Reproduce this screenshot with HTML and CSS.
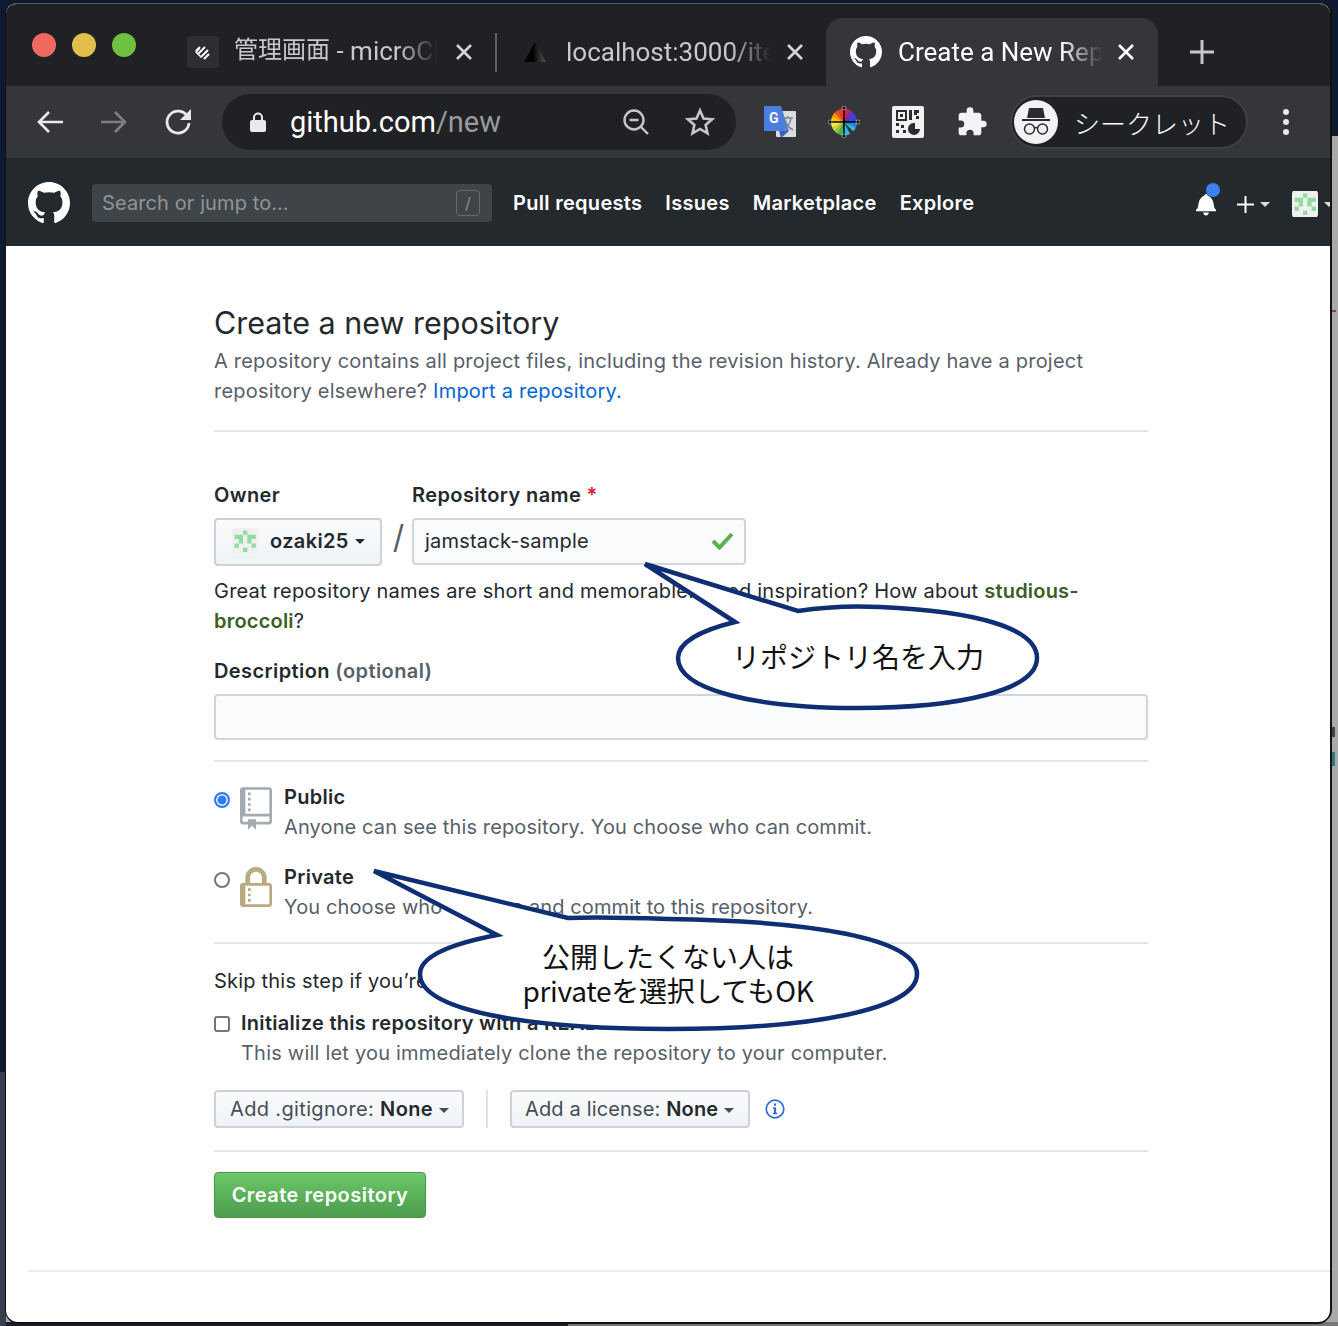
FILE: index.html
```html
<!DOCTYPE html>
<html lang="en">
<head>
<meta charset="UTF-8">
<title>Create a New Repository</title>
<link rel="stylesheet" href="styles.css">
</head>
<body>

<svg class="defs" width="0" height="0">
    <symbol id="mark" viewBox="0 0 16 16"><path fill-rule="evenodd" d="M8 0C3.58 0 0 3.58 0 8c0 3.54 2.29 6.53 5.47 7.59.4.07.55-.17.55-.38 0-.19-.01-.82-.01-1.49-2.01.37-2.53-.49-2.69-.94-.09-.23-.48-.94-.82-1.13-.28-.15-.68-.52-.01-.53.63-.01 1.08.58 1.23.82.72 1.21 1.87.87 2.33.66.07-.52.28-.87.51-1.07-1.78-.2-3.64-.89-3.64-3.95 0-.87.31-1.59.82-2.15-.08-.2-.36-1.02.08-2.12 0 0 .67-.21 2.2.82.64-.18 1.32-.27 2-.27.68 0 1.36.09 2 .27 1.53-1.04 2.2-.82 2.2-.82.44 1.1.16 1.92.08 2.12.51.56.82 1.27.82 2.15 0 3.07-1.87 3.75-3.65 3.95.29.25.54.73.54 1.48 0 1.07-.01 1.93-.01 2.2 0 .21.15.46.55.38A8.013 8.013 0 0016 8c0-4.42-3.58-8-8-8z"/></symbol>
    <symbol id="identicon" viewBox="0 0 26 26">
        <rect width="26" height="26" fill="#f0f0f0"/>
        <path fill="#8cdd9e" d="M11 2.500h4.300v4.300H11zM2.500 6.800h8.500v4.300H2.500zM15.300 6.800h8.500v4.300h-8.500zM6.800 11.100H11v4.300H6.800zM15.300 11.100h4.300v4.300h-4.300zM2.500 15.400h4.300v4.300H2.500zM19.600 15.400h4.300v4.300h-4.300zM11 19.700h4.300V24H11z"/>
    </symbol>
    <symbol id="close" viewBox="0 0 16 16"><path fill="none" stroke="currentColor" stroke-width="2.600" d="M1 1l14 14M15 1L1 15"/></symbol>
</svg>

<div class="window">

    <div class="tabbar">
        <div class="lights">
            <span class="light red"></span>
            <span class="light yellow"></span>
            <span class="light green"></span>
        </div>
        <div class="tab tab-first">
            <span class="favicon-box">
                <svg width="20" height="20" viewBox="0 0 20 20"><path fill="none" stroke="#fff" stroke-width="2" d="M5 12l7-7M8 15l7-7M3 9l4-4M11 17l5-5"/><path fill="#fff" d="M2 10l4-4 1 1-3 3 5 5-1 1z"/></svg>
            </span>
            <span class="tab-title"><span class="cjk-title">管理画面</span> - microCMS</span>
            <svg class="tab-close" width="16" height="16"><use href="#close"/></svg>
        </div>
        <span class="tab-sep"></span>
        <div class="tab tab-second">
            <svg class="triangle" width="24" height="20" viewBox="0 0 24 20"><defs><linearGradient id="tri" x1="0" x2="1"><stop offset="0.4" stop-color="#000"/><stop offset="1" stop-color="#555"/></linearGradient></defs><path fill="url(#tri)" d="M12 0l11 20H1z"/></svg>
            <span class="tab-title">localhost:3000/items</span>
            <svg class="tab-close" width="16" height="16"><use href="#close"/></svg>
        </div>
        <div class="tab tab-active">
            <svg class="tab-mark" width="32" height="32"><use href="#mark"/></svg>
            <span class="tab-title">Create a New Repository</span>
            <svg class="tab-close" width="16" height="16"><use href="#close"/></svg>
        </div>
        <svg class="newtab" width="24" height="24" viewBox="0 0 24 24"><path fill="#c6c7c9" d="M10.500 0h3v10.500h10.500v3H13.500V24h-3V13.500H0v-3h10.500z"/></svg>
    </div>

    <div class="toolbar">
        <svg class="tool" width="28" height="28" viewBox="0 0 28 28"><path fill="none" stroke="#e8eaed" stroke-width="2.600" d="M27 14H3M13 4L3 14l10 10"/></svg>
        <svg class="tool" width="28" height="28" viewBox="0 0 28 28"><path fill="none" stroke="#7d7f82" stroke-width="2.600" d="M1 14h24M15 4l10 10-10 10"/></svg>
        <svg class="tool" width="28" height="28" viewBox="0 0 28 28"><path fill="none" stroke="#e8eaed" stroke-width="2.800" d="M23.500 8.500A11 11 0 1 0 25 15"/><path fill="#e8eaed" d="M27 1v11H16z"/></svg>

        <div class="omnibox">
            <svg class="lock-small" width="16" height="20" viewBox="0 0 16 20"><path fill="none" stroke="#e8eaed" stroke-width="2" d="M4 9V5.500a4 4 0 0 1 8 0V9"/><rect y="8" width="16" height="12" rx="2" fill="#e8eaed"/></svg>
            <span class="url">github.com<span class="url-path">/new</span></span>
            <svg class="omni-zoom" width="28" height="28" viewBox="0 0 28 28"><circle cx="12" cy="12" r="9.500" fill="none" stroke="#c4c6c9" stroke-width="2.400"/><path stroke="#c4c6c9" stroke-width="2.400" d="M7.500 12h9M19 19l7 7"/></svg>
            <svg class="omni-star" width="30" height="30" viewBox="0 0 30 30"><path fill="none" stroke="#c4c6c9" stroke-width="2.600" d="M15 3.500l3.500 8 8.500.8-6.400 5.600 1.900 8.400-7.500-4.400-7.500 4.400 1.900-8.400L3 12.300l8.500-.8z"/></svg>
        </div>

        <div class="extensions">
            <svg width="32" height="32" viewBox="0 0 32 32">
                <rect x="12" y="5" width="20" height="26" rx="1" fill="#dcdde0"/>
                <path fill="#4a7fe0" d="M0 0h17l8 25H1a1 1 0 0 1-1-1z"/>
                <path fill="#3a5fc4" d="M15 25h10l-8 7z"/>
                <text x="5" y="17" class="g-letter">G</text>
                <path fill="none" stroke="#7f8a94" stroke-width="1.500" d="M19 12h10M24 10v2M27 12c-1 6-4 10-7 12M21 13c1 5 4 9 8 11"/>
            </svg>
            <svg width="32" height="32" viewBox="0 0 32 32">
                <defs><clipPath id="wheel"><ellipse cx="16" cy="16" rx="13" ry="13.500"/></clipPath></defs>
                <g clip-path="url(#wheel)">
                    <path fill="#e53935" d="M16 16V0h-8z"/><path fill="#d81b60" d="M16 16V0h8z"/>
                    <path fill="#8e24aa" d="M16 16L24 0h8z"/><path fill="#3d3fd6" d="M16 16L32 0v16z"/>
                    <path fill="#1e88e5" d="M16 16h16v8z"/><path fill="#26c6da" d="M16 16l16 8v8z"/>
                    <path fill="#29b6f6" d="M16 16l8 16h-8z"/><path fill="#4caf50" d="M16 16v16H8z"/>
                    <path fill="#8bc34a" d="M16 16L8 32H0z"/><path fill="#c6e03a" d="M16 16L0 32v-8z"/>
                    <path fill="#ffeb3b" d="M16 16L0 24v-8z"/><path fill="#ffc107" d="M16 16H0V8z"/>
                    <path fill="#ff9800" d="M16 16L0 8V0z"/><path fill="#f4511e" d="M16 16L0 0h8z"/>
                </g>
                <path stroke="#000" stroke-width="1.500" d="M16 1v30M1 16h30"/>
                <circle cx="16" cy="2" r="2" fill="#111" stroke="#ddd" stroke-width=".6"/><circle cx="16" cy="30" r="2" fill="#111" stroke="#ddd" stroke-width=".6"/>
                <circle cx="2" cy="16" r="2" fill="#111" stroke="#ddd" stroke-width=".6"/><circle cx="30" cy="16" r="2" fill="#111" stroke="#ddd" stroke-width=".6"/>
            </svg>
            <svg width="32" height="32" viewBox="0 0 32 32">
                <rect width="32" height="32" rx="2" fill="#f1f1f1"/>
                <path fill="none" stroke="#2b2c2f" stroke-width="2" d="M5 5h9v9H5z"/>
                <path fill="#2b2c2f" d="M8 8h3v3H8zM17 4h3v10h-3zM22 4h5v3h-2v2h-3zM24 10h3v3h-3zM4 17h3v3H4zM9 19h3v3H9zM4 24h3v3H4zM11 24h3v3h-3z"/>
                <path fill="#2b2c2f" d="M23 17a6 6 0 1 0 5 6h-5z"/>
            </svg>
            <svg width="32" height="32" viewBox="0 0 24 24"><path fill="#f1f3f4" d="M20.500 11H19V7c0-1.100-.9-2-2-2h-4V3.500a2.500 2.500 0 0 0-5 0V5H4c-1.100 0-2 .9-2 2v3.800h1.500a2.700 2.700 0 0 1 0 5.400H2V20c0 1.100.9 2 2 2h3.800v-1.500a2.700 2.700 0 0 1 5.400 0V22H17c1.100 0 2-.9 2-2v-4h1.500a2.500 2.500 0 0 0 0-5z"/></svg>
        </div>

        <div class="incognito">
            <span class="incognito-face">
                <svg width="28" height="30" viewBox="0 0 28 30">
                    <path fill="#2b2c2f" d="M7 1h14l2 10H5zM0 12h28v2H0z"/>
                    <g fill="none" stroke="#2b2c2f" stroke-width="1.500"><circle cx="7.500" cy="22" r="5"/><circle cx="20.500" cy="22" r="5"/><path d="M12.500 21c1-.7 2-.7 3 0"/></g>
                </svg>
            </span>
            <span class="incognito-label">シークレット</span>
        </div>
        <svg class="kebab" width="8" height="28" viewBox="0 0 8 28"><circle cx="4" cy="4" r="3" fill="#e8eaed"/><circle cx="4" cy="14" r="3" fill="#e8eaed"/><circle cx="4" cy="24" r="3" fill="#e8eaed"/></svg>
    </div>

    <header class="gh-header">
        <svg class="gh-logo" width="42" height="42"><use href="#mark"/></svg>
        <div class="search">
            <span class="search-text">Search or jump to…</span>
            <span class="slash">/</span>
        </div>
        <nav class="gh-nav">
            <a>Pull requests</a>
            <a>Issues</a>
            <a>Marketplace</a>
            <a>Explore</a>
        </nav>
        <div class="gh-right">
            <span class="bell">
                <svg width="20" height="24" viewBox="0 0 14 16"><path fill="#fff" d="M14 12v1H0v-1l.73-.58c.77-.77.81-2.550 1.190-4.420C2.690 3.230 6 2 6 2c0-.55.45-1 1-1s1 .45 1 1c0 0 3.390 1.230 4.160 5 .38 1.880.42 3.660 1.190 4.420l.66.58H14zm-7 4c1.110 0 2-.89 2-2H5c0 1.110.89 2 2 2z"/></svg>
                <span class="bell-dot"></span>
            </span>
            <svg class="plus" width="17" height="17" viewBox="0 0 17 17"><path fill="#fff" d="M7.500 0h2v7.500H17v2H9.500V17h-2V9.500H0v-2h7.500z"/></svg>
            <span class="caret caret-white"></span>
            <svg class="gh-avatar" width="26" height="28"><use href="#identicon"/></svg>
            <span class="caret caret-white"></span>
        </div>
    </header>

    <main class="page">
        <h1>Create a new repository</h1>
        <p class="lead">A repository contains all project files, including the revision history. Already have a project repository elsewhere? <a class="link">Import a repository.</a></p>
        <hr class="rule rule-lead">

        <div class="name-row">
            <div class="owner-col">
                <label class="label">Owner</label>
                <button class="btn owner-btn">
                    <svg class="owner-avatar" width="26" height="26"><use href="#identicon"/></svg>
                    <span>ozaki25</span>
                    <span class="caret"></span>
                </button>
            </div>
            <span class="slash-sep">/</span>
            <div class="repo-col">
                <label class="label">Repository name <span class="req">*</span></label>
                <div class="input repo-input">
                    <span>jamstack-sample</span>
                    <svg width="23" height="18" viewBox="0 0 23 18"><path fill="none" stroke="#5cb04f" stroke-width="4" d="M2 9l6.500 6.500L21 2"/></svg>
                </div>
            </div>
        </div>

        <p class="note">Great repository names are short and memorable. Need inspiration? How about <strong class="suggest">studious-broccoli</strong>?</p>

        <label class="label desc-label">Description <span class="optional">(optional)</span></label>
        <div class="input desc-input"></div>
        <hr class="rule rule-desc">

        <div class="choice choice-public">
            <span class="radio radio-on"></span>
            <svg class="choice-icon" width="32" height="43" viewBox="0 0 12 16"><path fill="#a3aab1" fill-rule="evenodd" d="M4 9H3V8h1v1zm0-3H3v1h1V6zm0-2H3v1h1V4zm0-2H3v1h1V2zm8-1v12c0 .55-.45 1-1 1H6v2l-1.500-1.500L3 16v-2H1c-.55 0-1-.45-1-1V1c0-.55.45-1 1-1h10c.55 0 1 .45 1 1zm-1 10H1v2h2v-1h3v1h5v-2zm0-10H2v9h9V1z"/></svg>
            <div>
                <div class="choice-title">Public</div>
                <div class="choice-text">Anyone can see this repository. You choose who can commit.</div>
            </div>
        </div>
        <div class="choice choice-private">
            <span class="radio"></span>
            <svg class="choice-icon" width="32" height="40" viewBox="0 0 12 15"><path fill="#b8ab82" fill-rule="evenodd" d="M4 13H3v-1h1v1zm8-6v7c0 .55-.45 1-1 1H1c-.55 0-1-.45-1-1V7c0-.55.45-1 1-1h1V4c0-2.200 1.800-4 4-4s4 1.800 4 4v2h1c.55 0 1 .45 1 1zM3.800 6h4.410V4c0-1.220-.98-2.200-2.200-2.200-1.220 0-2.200.98-2.200 2.200v2H3.800zM11 7H2v7h9V7zM4 8H3v1h1V8zm0 2H3v1h1v-1z"/></svg>
            <div>
                <div class="choice-title">Private</div>
                <div class="choice-text">You choose who can see and commit to this repository.</div>
            </div>
        </div>
        <hr class="rule rule-private">

        <p class="skip">Skip this step if you’re importing an existing repository.</p>
        <div class="init">
            <span class="checkbox"></span>
            <div>
                <div class="choice-title">Initialize this repository with a README</div>
                <div class="choice-text">This will let you immediately clone the repository to your computer.</div>
            </div>
        </div>

        <div class="add-row">
            <button class="btn add-btn add-gitignore">Add .gitignore: <b>None</b><span class="caret"></span></button>
            <span class="add-sep"></span>
            <button class="btn add-btn add-license">Add a license: <b>None</b><span class="caret"></span></button>
            <svg class="info" width="20" height="20" viewBox="0 0 20 20"><circle cx="10" cy="10" r="8.800" fill="none" stroke="#2a6fd6" stroke-width="1.700"/><path fill="#2a6fd6" d="M8.900 4.500h2.200v2.200H8.900zM8 8.300h3.100v5.500H12v1.500H8v-1.500h1V9.800H8z"/></svg>
        </div>
        <hr class="rule rule-add">

        <button class="btn-create">Create repository</button>
    </main>

    <div class="page-footer"></div>
</div>

<!-- speech bubbles pasted over the screenshot -->
<svg class="callouts" width="1338" height="1326" viewBox="0 0 1338 1326">
    <path class="bubble" d="M735 622L645 564L798 611C830 606 860 606 880 607C975 611 1037 628 1037 658C1037 690 960 708 858 708C755 708 678 690 678 658C678 642 702 630 735 622Z"/>
    <text class="bubble-text" x="858" y="668">リポジトリ名を入力</text>
    <path class="bubble" d="M497 935L374 871L568 918C590 917 640 918 668 919C810 921 917 938 917 974C917 1010 810 1029 668 1029C525 1029 420 1010 420 974C420 958 445 945 497 935Z"/>
    <text class="bubble-text" x="668" y="968">公開したくない人は</text>
    <text class="bubble-text bubble-latin" x="668" y="1002">privateを選択してもOK</text>
</svg>

</body>
</html>
```

FILE: styles.css
```css
* {
    box-sizing: border-box;
}
html, body {
    margin: 0;
    padding: 0;
}
body {
    width: 1338px;
    height: 1326px;
    overflow: hidden;
    position: relative;
    padding: 3px 8px 4px 6px;
    /* desktop showing round the window, with bits of another window on the right */
    background:
        linear-gradient(#0e1a30, #0e1a30) 0 0 / 100% 136px no-repeat,
        linear-gradient(#0e1a30, #0e1a30) 0 0 / 6px 1072px no-repeat,
        linear-gradient(#3a3e50, #3a3e50) 0 1072px / 6px 254px no-repeat,
        linear-gradient(#1c1d28, #1c1d28) 0 1322px / 568px 4px no-repeat,
        linear-gradient(#777, #777) 568px 1322px / 770px 4px no-repeat,
        linear-gradient(#9a3b45, #9a3b45) 1331px 310px / 5px 2px no-repeat,
        linear-gradient(#444, #444) 1331px 727px / 4px 10px no-repeat,
        linear-gradient(#2a7d7d, #2a7d7d) 1332px 752px / 3px 14px no-repeat,
        #a9a9a9;
    font-family: Inter, "Noto Sans CJK JP", sans-serif;
    color: #24292e;
}
.defs {
    position: absolute;
}
.window {
    height: 100%;
    background: #fff;
    border-radius: 10px 10px 12px 12px;
    border-top: 1px solid #55575a;
    box-shadow: 2px 0 0 #111, 0 2px 0 #111, -1px 0 0 #111;
    overflow: hidden;
    display: flex;
    flex-direction: column;
}

/* tabs */
.tabbar {
    height: 82px;
    flex: none;
    display: flex;
    align-items: flex-end;
    background: #202124;
    font-family: Roboto, "Noto Sans CJK JP", sans-serif;
    font-size: 26px;
    color: #c8c9cb;
}
.lights {
    align-self: flex-start;
    display: flex;
    gap: 16px;
    padding: 29px 0 0 26px;
    width: 181px;
    flex: none;
}
.light {
    width: 24px;
    height: 24px;
    border-radius: 50%;
}
.red { background: #ee6a5f; }
.yellow { background: #e2bf4c; }
.green { background: #6fc041; }
.tab {
    height: 68px;
    display: flex;
    align-items: center;
    flex: none;
    white-space: nowrap;
}
.tab-first {
    width: 289px;
}
.favicon-box {
    width: 32px;
    height: 32px;
    background: #2d2e31;
    border-radius: 3px;
    display: flex;
    align-items: center;
    justify-content: center;
    margin-right: 15px;
}
.tab-title {
    overflow: hidden;
    line-height: 32px;
    -webkit-mask-image: linear-gradient(to right, #000 80%, transparent);
    mask-image: linear-gradient(to right, #000 80%, transparent);
}
.cjk-title {
    font-size: 24px;
    line-height: 1;
    position: relative;
    top: -2px;
}
.tab-first .tab-title {
    width: 204px;
    position: relative;
    top: -1px;
}
.tab-close {
    margin-left: 18px;
    flex: none;
    color: #d5d6d8;
}
.tab-sep {
    width: 2px;
    height: 39px;
    background: #5f6063;
    flex: none;
    margin: 0 0 14px 19px;
}
.tab-second {
    width: 329px;
    padding-left: 26px;
}
.triangle {
    margin-right: 19px;
}
.tab-second .tab-title {
    width: 205px;
}
.tab-second .tab-close {
    margin-left: 16px;
}
.tab-active {
    width: 332px;
    background: #35363a;
    border-radius: 16px 16px 0 0;
    padding-left: 24px;
    color: #fff;
}
.tab-mark {
    fill: #fff;
    margin-right: 16px;
}
.tab-active .tab-title {
    width: 204px;
}
.tab-active .tab-close {
    margin-left: 16px;
    color: #fff;
}
.newtab {
    margin: 0 0 22px 32px;
    flex: none;
}

/* toolbar */
.toolbar {
    height: 72px;
    flex: none;
    display: flex;
    align-items: center;
    background: #35363a;
    padding-left: 30px;
}
.tool {
    margin-right: 36px;
    flex: none;
}
.omnibox {
    width: 514px;
    height: 56px;
    margin-left: -6px;
    border-radius: 28px;
    background: #202124;
    display: flex;
    align-items: center;
    padding-left: 28px;
    flex: none;
}
.url {
    font-family: Roboto, sans-serif;
    font-size: 29px;
    color: #fff;
    margin-left: 24px;
}
.url-path {
    color: #9a9b9e;
}
.omni-zoom {
    margin-left: auto;
}
.omni-star {
    margin: 0 21px 0 35px;
}
.extensions {
    display: flex;
    gap: 32px;
    margin-left: 28px;
    align-items: center;
    flex: none;
}
.incognito {
    width: 238px;
    height: 54px;
    margin-left: 22px;
    border: 2px solid #3f4044;
    border-radius: 27px;
    background: #202124;
    display: flex;
    align-items: center;
    padding-left: 2px;
    flex: none;
}
.incognito-face {
    width: 44px;
    height: 44px;
    border-radius: 50%;
    background: #f1f3f4;
    display: flex;
    align-items: center;
    justify-content: center;
}
.incognito-label {
    font-family: "Noto Sans CJK JP", sans-serif;
    font-weight: 300;
    font-size: 26px;
    color: #fff;
    margin-left: 16px;
}
.kebab {
    margin-left: 34px;
    flex: none;
}

/* github header */
.gh-header {
    height: 88px;
    flex: none;
    display: flex;
    align-items: center;
    background: #24292e;
    padding: 2px 0 0 22px;
    color: #fff;
    position: relative;
}
.gh-logo {
    fill: #fff;
    flex: none;
}
.search {
    width: 400px;
    height: 38px;
    margin-left: 22px;
    background: #3f4448;
    border-radius: 4px;
    display: flex;
    align-items: center;
    justify-content: space-between;
    padding: 0 12px 0 10px;
    flex: none;
}
.search-text {
    font-size: 20px;
    letter-spacing: .1px;
    color: #8f9498;
}
.slash {
    width: 24px;
    height: 26px;
    border: 1px solid #646a6e;
    border-radius: 4px;
    font-size: 16px;
    color: #888d91;
    text-align: center;
    line-height: 24px;
}
.gh-nav {
    display: flex;
    gap: 23px;
    margin-left: 21px;
    font-size: 20px;
    font-weight: 600;
    letter-spacing: .3px;
}
.gh-right {
    position: absolute;
    left: 1190px;
    top: 2px;
    height: 100%;
    display: flex;
    align-items: center;
}
.bell {
    position: relative;
    display: flex;
    margin-right: 21px;
}
.bell-dot {
    position: absolute;
    top: -9px;
    left: 10px;
    width: 14px;
    height: 14px;
    border-radius: 50%;
    background: #3b82ee;
}
.plus {
    margin-right: 6px;
}
.gh-avatar {
    border-radius: 4px;
    margin: 0 6px 0 22px;
    flex: none;
}
.caret {
    display: inline-block;
    width: 0;
    height: 0;
    border: 5px solid transparent;
    border-top-color: currentColor;
    border-bottom: 0;
    margin-left: 6px;
    vertical-align: middle;
    flex: none;
}
.caret-white {
    margin-left: 0;
    border-top-color: #ddd;
}

/* form */
.page {
    flex: 1;
    padding: 0 182px 0 208px;
    font-size: 20px;
    line-height: 30px;
    letter-spacing: .21px;
}
h1 {
    margin: 57px 0 0;
    font-size: 30.500px;
    line-height: 40px;
    font-weight: 400;
    letter-spacing: 0;
}
.lead {
    margin: 3px 0 0;
    color: #586069;
}
.link {
    color: #0366d6;
}
.rule {
    border: 0;
    height: 2px;
    background: #e1e4e8;
    margin: 0;
}
.rule-lead {
    margin-top: 24px;
}
.name-row {
    display: flex;
    margin-top: 48px;
}
.label {
    display: block;
    font-weight: 600;
    line-height: 30px;
    letter-spacing: .4px;
}
.req {
    color: #cb2431;
}
.btn {
    font-family: inherit;
    background: linear-gradient(#fafbfc, #eff3f6);
    border: 2px solid #ced1d6;
    border-radius: 4px;
    color: #24292e;
    font-size: 20px;
    letter-spacing: .35px;
    padding: 0;
}
.owner-btn {
    width: 168px;
    height: 48px;
    margin-top: 8px;
    display: flex;
    align-items: center;
    padding: 0 0 2px 16px;
    font-weight: 600;
}
.owner-avatar {
    border-radius: 4px;
    margin-right: 12px;
    flex: none;
}
.slash-sep {
    width: 30px;
    padding-left: 3px;
    text-align: center;
    font-size: 32px;
    margin-top: 42px;
    color: #586069;
    font-weight: 400;
}
.input {
    background: #fafbfc;
    border: 2px solid #d1d5da;
    border-radius: 4px;
}
.repo-input {
    width: 334px;
    height: 47px;
    margin-top: 8px;
    display: flex;
    align-items: center;
    justify-content: space-between;
    padding: 0 10px 2px 11px;
}
.note {
    margin: 10px 0 0;
}
.suggest {
    color: #3a5f26;
    font-weight: 600;
}
.desc-label {
    margin-top: 20px;
}
.optional {
    color: #586069;
}
.desc-input {
    height: 46px;
    margin-top: 8px;
}
.rule-desc {
    margin-top: 20px;
}
.choice {
    display: flex;
    align-items: flex-start;
}
.choice-public {
    margin-top: 20px;
}
.choice-private {
    margin-top: 20px;
}
.radio {
    width: 16px;
    height: 16px;
    border-radius: 50%;
    border: 2px solid #757575;
    margin: 10px 10px 0 0;
    flex: none;
    background: #fff;
}
.radio-on {
    border: 2px solid #2f7bf6;
    box-shadow: inset 0 0 0 1.500px #fff;
    background: #2f7bf6;
}
.choice-icon {
    margin: 5px 12px 0 0;
    flex: none;
}
.choice-title {
    font-weight: 600;
    letter-spacing: .3px;
}
.choice-text {
    color: #586069;
}
.choice .choice-text {
    letter-spacing: .12px;
}
.rule-private {
    margin-top: 20px;
}
.skip {
    margin: 22px 0 0;
}
.init {
    display: flex;
    margin-top: 12px;
}
.checkbox {
    width: 16px;
    height: 16px;
    border: 2px solid #757575;
    border-radius: 3px;
    margin: 8px 11px 0 0;
    flex: none;
    background: #fff;
}
.add-row {
    display: flex;
    align-items: center;
    margin-top: 22px;
    height: 38px;
}
.add-btn {
    height: 38px;
    padding: 0 0 0 14px;
    font-weight: 400;
    color: #444d56;
    white-space: nowrap;
    text-align: left;
}
.add-gitignore {
    width: 250px;
}
.add-license {
    width: 240px;
    padding-left: 13px;
    letter-spacing: .15px;
}
.add-btn b {
    font-weight: 600;
    color: #24292e;
}
.add-sep {
    width: 2px;
    height: 38px;
    background: #e1e4e8;
    margin: 0 22px;
}
.info {
    margin-left: 15px;
}
.rule-add {
    margin-top: 22px;
}
.btn-create {
    display: block;
    width: 212px;
    height: 46px;
    margin-top: 20px;
    border: 1px solid #4a9445;
    border-radius: 4px;
    background: linear-gradient(#6cc869, #4c9c4c);
    color: #fff;
    font-family: inherit;
    font-size: 20px;
    font-weight: 600;
    letter-spacing: .47px;
    padding: 0;
}
.page-footer {
    flex: none;
    height: 52px;
    margin-left: 22px;
    border-top: 2px solid #e9ebee;
}

/* overlay */
.callouts {
    position: absolute;
    left: 0;
    top: 0;
}
.bubble {
    fill: #fff;
    stroke: #0e2f73;
    stroke-width: 4.500;
    stroke-linejoin: miter;
}
.bubble-text {
    font-family: "Noto Sans CJK JP", sans-serif;
    font-weight: 400;
    font-size: 28px;
    fill: #111;
    text-anchor: middle;
}
.bubble-latin {
    letter-spacing: -.3px;
}
.g-letter {
    font-family: Roboto, sans-serif;
    font-weight: 700;
    font-size: 14px;
    fill: #fff;
}
```
